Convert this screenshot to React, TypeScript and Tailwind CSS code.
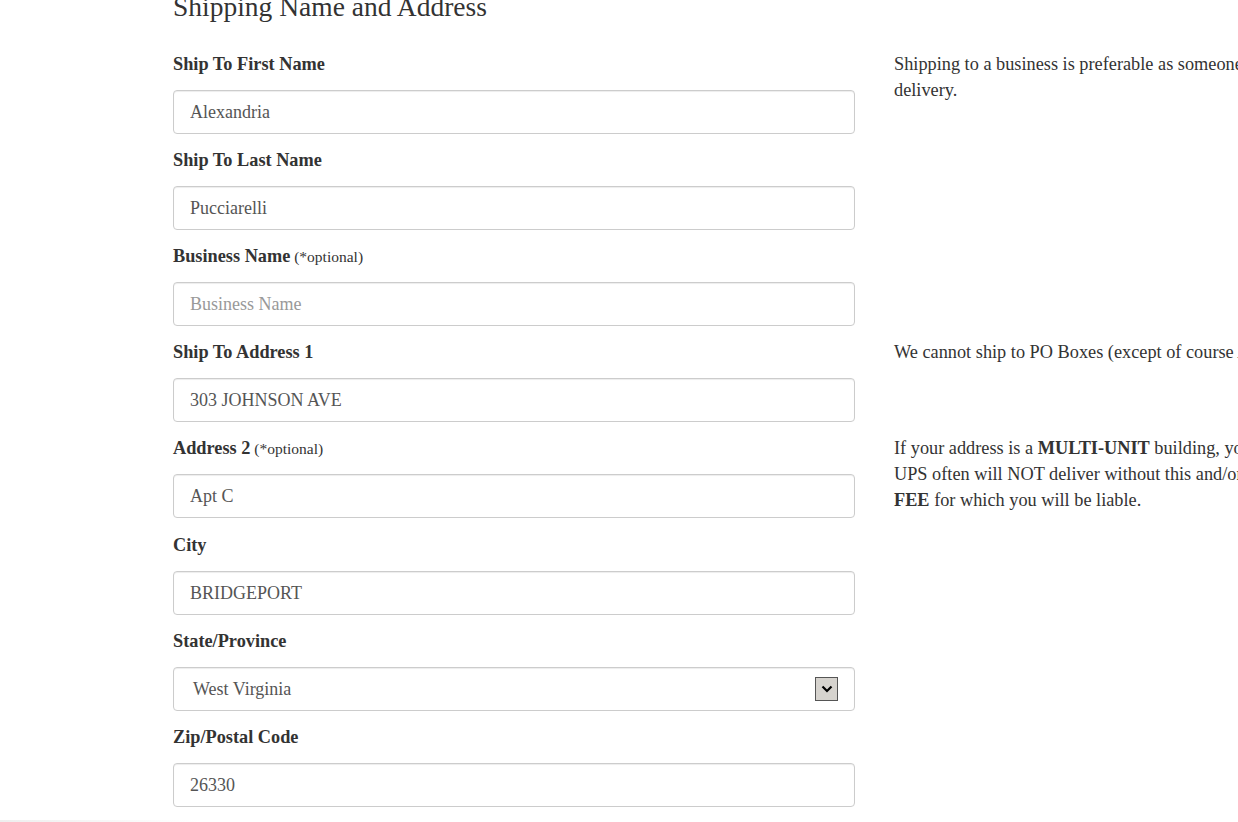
import React from 'react';

interface Field {
    label: string;
    optional?: boolean;
    value?: string;
    placeholder?: string;
    select?: boolean;
}

const fields: Field[] = [
    { label: 'Ship To First Name', value: 'Alexandria' },
    { label: 'Ship To Last Name', value: 'Pucciarelli' },
    { label: 'Business Name', optional: true, placeholder: 'Business Name' },
    { label: 'Ship To Address 1', value: '303 JOHNSON AVE' },
    { label: 'Address 2', optional: true, value: 'Apt C' },
    { label: 'City', value: 'BRIDGEPORT' },
    { label: 'State/Province', value: 'West Virginia', select: true },
    { label: 'Zip/Postal Code', value: '26330' },
];

const FieldRow: React.FC<{ field: Field }> = ({ field }) => (
    <div className={field.label === 'Address 2' ? 'pb-[17px]' : 'pb-4'}>
        <label className="block h-5 leading-5 mb-4 text-[18.3px] font-bold text-[#333] whitespace-nowrap">
            {field.label}
            {field.optional && <span className="font-normal text-[15.5px]"> (*optional)</span>}
        </label>
        {field.select ? (
            <div className="h-[44px] w-full rounded-[4px] border border-[#ccc] bg-white flex items-center pl-[19px] pr-[16px] shadow-[inset_0_1px_1px_rgba(0,0,0,0.075)]">
                <span className="flex-1 text-[18px] text-[#555]">{field.value}</span>
                <span className="w-[23px] h-[24px] border border-[#555] bg-[#d6d3ce] flex items-center justify-center">
                    <svg width="12" height="8" viewBox="0 0 12 8">
                        <path d="M1.5 1.5 L6 6 L10.5 1.5" fill="none" stroke="#000" strokeWidth="2.2" />
                    </svg>
                </span>
            </div>
        ) : (
            <input
                className="block h-[44px] w-full rounded-[4px] border border-[#ccc] bg-white px-4 text-[18px] text-[#555] placeholder:text-[#999] shadow-[inset_0_1px_1px_rgba(0,0,0,0.075)] outline-none"
                defaultValue={field.value}
                placeholder={field.placeholder}
                style={{ fontFamily: '"Liberation Serif", serif' }}
            />
        )}
    </div>
);

export default function App() {
    return (
        <div
            className="relative w-[1238px] h-[822px] overflow-hidden bg-white text-[#333]"
            style={{ fontFamily: '"Liberation Serif", "Times New Roman", serif' }}
        >
            <h2 className="pl-[173px] -mt-[8px] h-[62px] leading-[30px] text-[27.5px] text-[#333] whitespace-nowrap">
                Shipping Name and Address
            </h2>
            <div className="flex pl-[173px]">
                {/* Form fields */}
                <div className="w-[682px] shrink-0">
                    {fields.map((f) => (
                        <FieldRow key={f.label} field={f} />
                    ))}
                </div>

                {/* Help notes */}
                <div className="ml-[39px] w-[800px] shrink-0 text-[18.3px] leading-[26px] text-[#333] whitespace-nowrap">
                    <p className="-mt-[3px] h-[288px]">
                        Shipping to a business is preferable as someone will be there to sign for the
                        <br />
                        delivery.
                    </p>
                    <p className="h-[96px]">
                        We cannot ship to PO Boxes (except of course APO/FPO military addresses).
                    </p>
                    <p>
                        If your address is a <b>MULTI-UNIT</b> building, you must include the apartment number.
                        <br />
                        UPS often will NOT deliver without this and/or will charge an ADDRESS CORRECTION
                        <br />
                        <b>FEE</b> for which you will be liable.
                    </p>
                </div>
            </div>
            <div className="absolute left-0 bottom-0 w-[200px] h-[2px] bg-gradient-to-r from-[#eee] to-transparent" />
        </div>
    );
}
